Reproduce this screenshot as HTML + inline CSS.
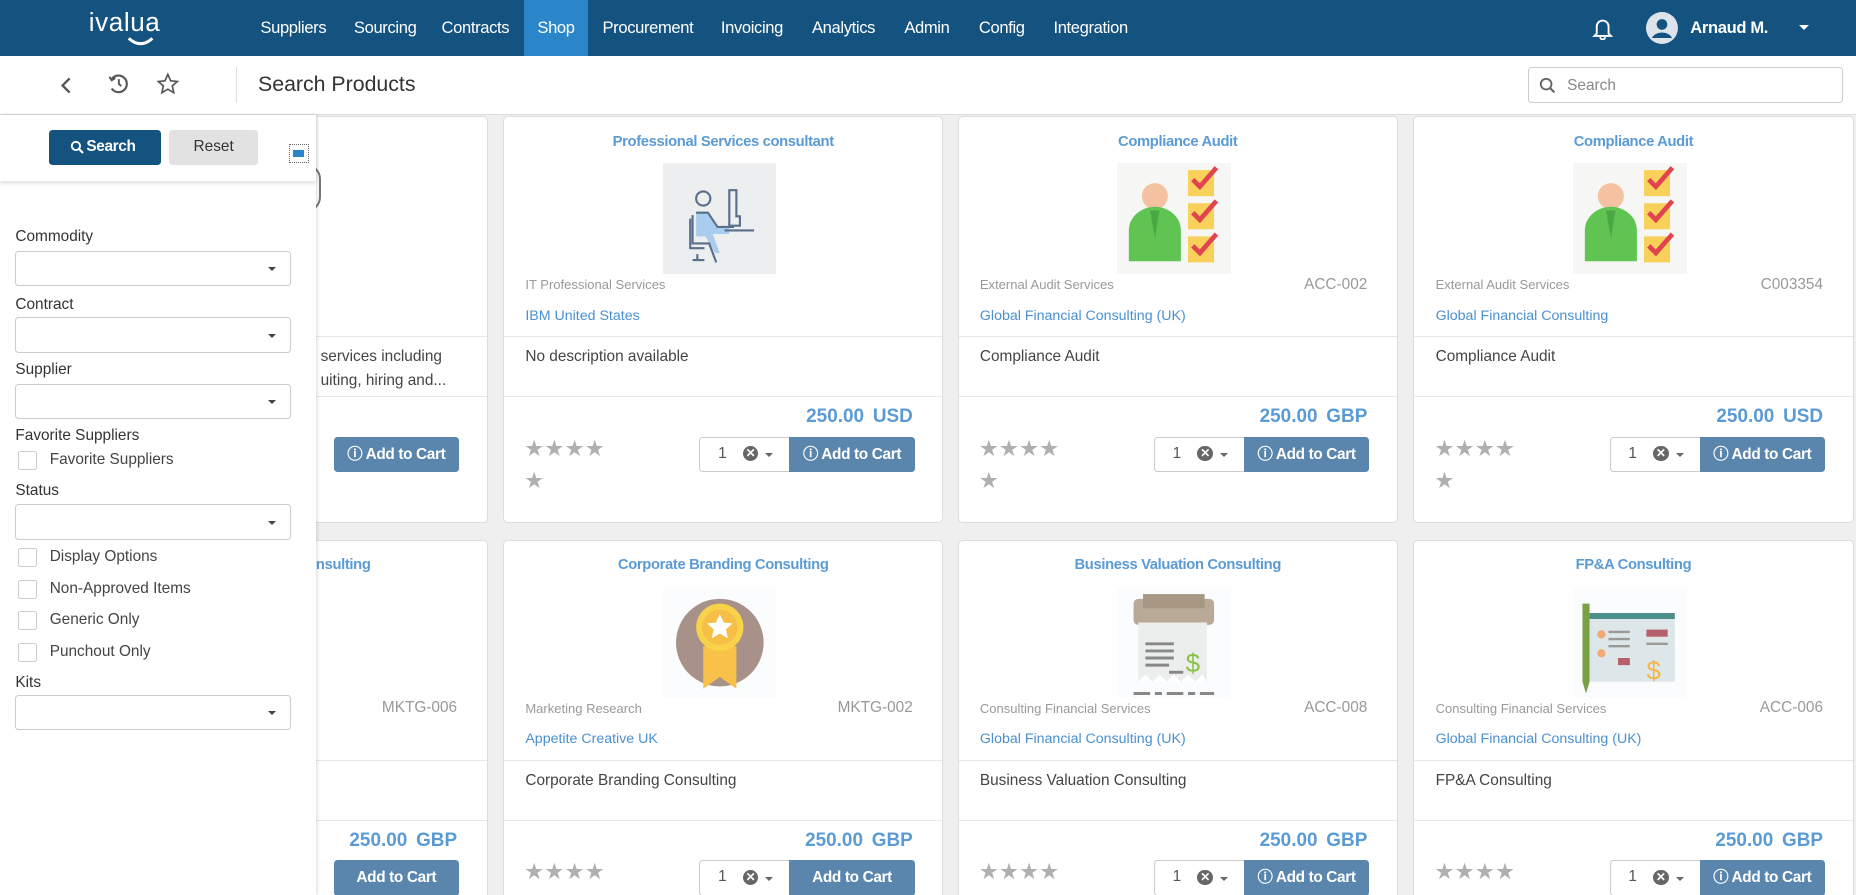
<!DOCTYPE html>
<html><head><meta charset="utf-8"><style>
*{box-sizing:border-box;margin:0;padding:0}
html,body{width:1856px;height:895px;overflow:hidden;background:#f2f2f2}
#w{zoom:1.18367;width:1568px;height:756px;position:relative;font-family:"Liberation Sans",sans-serif;overflow:hidden;background:#efefef}
.a{position:absolute}
.nav{left:0;top:0;width:1568px;height:47px;background:#14527f}
.nav span.i{position:absolute;top:15px;color:#fff;font-size:14px;letter-spacing:-0.3px}
.sub{left:0;top:47px;width:1568px;height:50px;background:#fff;border-bottom:1px solid #ddd}
.card{position:absolute;width:372px;height:344px;background:#fff;border:1px solid #ddd;border-radius:4px;overflow:hidden}
.card .t{position:absolute;top:14px;left:0;right:0;text-align:center;color:#5b9bd5;font-weight:bold;font-size:12.5px;letter-spacing:-0.3px}
.card .im{position:absolute;top:39px;left:134px;width:96px;height:94px;background:#fbfcfd}
.card .cat{position:absolute;top:135px;left:18px;font-size:11px;color:#999}
.card .cd{position:absolute;top:134px;right:25px;font-size:13px;color:#999}
.card .sp{position:absolute;top:161px;left:18px;font-size:12px;color:#4a90d0}
.card .hr1{position:absolute;top:185px;left:0;right:0;border-top:1px solid #e8e8e8}
.card .ds{position:absolute;top:193px;left:18px;font-size:13px;color:#444;line-height:20px}
.card .hr2{position:absolute;top:236px;left:0;right:0;border-top:1px solid #e8e8e8}
.card .pr{position:absolute;top:244px;right:25px;font-size:16px;font-weight:bold;color:#5b9bd5;word-spacing:3px}
.card .st{position:absolute;left:17px;font-size:19px;line-height:20px;color:#b0b0b0;letter-spacing:0px}
.card .q{position:absolute;top:270px;left:165px;width:77px;height:30px;border:1px solid #ccc;border-radius:3px 0 0 3px;font-size:13px;color:#555;padding:6px 0 0 15px}
.card .q b{position:absolute;left:36px;top:7px;width:13px;height:13px;border-radius:50%;background:#666;color:#fff;font-size:10px;line-height:13px;text-align:center}
.card .q i{position:absolute;left:55px;top:13px;border:4px solid transparent;border-top-color:#666;border-bottom:0}
.card .bt{position:absolute;top:270px;left:241px;width:106px;height:30px;background:#5a86ad;color:#fff;font-weight:bold;font-size:13px;text-align:center;line-height:30px;border-radius:0 3px 3px 0;letter-spacing:-0.3px}
.lp{left:0;top:97px;width:267px;height:659px;background:#fff;box-shadow:1px 0 3px rgba(0,0,0,.15)}
.lbl{position:absolute;left:13px;font-size:13px;color:#333}
.sel{position:absolute;left:13px;width:233px;height:30px;border:1px solid #ccc;border-radius:3px;background:#fff}
.sel:after{content:"";position:absolute;right:12px;top:13px;border:4px solid transparent;border-top-color:#444;border-bottom:0}
.cb{position:absolute;left:15px;width:16px;height:16px;border:1px solid #ccc;border-radius:2px}
.cbl{position:absolute;left:42px;font-size:13px;color:#444}
</style></head><body><div id="w">

<div class="a nav">
 <div class="a" style="left:75px;top:6px;color:#fff;font-size:22px;letter-spacing:0.5px">ivalua</div>
 <svg class="a" style="left:105px;top:30px" width="28" height="10"><path d="M4 2 Q14 11 24 2" stroke="#fff" stroke-width="2.5" fill="none"/></svg>
 <div class="a" style="left:443px;top:0;width:54px;height:47px;background:#2a86c8"></div>
 <span class="i" style="left:220px">Suppliers</span><span class="i" style="left:299px">Sourcing</span><span class="i" style="left:373px">Contracts</span><span class="i" style="left:454px">Shop</span><span class="i" style="left:509px">Procurement</span><span class="i" style="left:609px">Invoicing</span><span class="i" style="left:686px">Analytics</span><span class="i" style="left:764px">Admin</span><span class="i" style="left:827px">Config</span><span class="i" style="left:890px">Integration</span>
 <svg class="a" style="left:1345px;top:14px" width="18" height="20"><path d="M4 14 V8 a5 5 0 0 1 10 0 V14 L16 16 H2 Z M7 17 a2 2 0 0 0 4 0" stroke="#fff" stroke-width="1.6" fill="none"/></svg>
 <svg class="a" style="left:1391px;top:10px" width="27" height="27"><circle cx="13.5" cy="13.5" r="13.5" fill="#dde3ea"/><circle cx="13.5" cy="10.5" r="4.5" fill="#14527f"/><path d="M5 22 a9 7 0 0 1 17 0" fill="#14527f"/></svg>
 <span class="i" style="left:1428px;font-weight:bold">Arnaud M.</span>
 <div class="a" style="left:1520px;top:21px;border:5px solid transparent;border-top-color:#fff;border-bottom:0"></div>
</div>

<div class="a sub">
 <svg class="a" style="left:50px;top:17px" width="12" height="16"><path d="M9 2 L3 8 L9 14" stroke="#555" stroke-width="2" fill="none"/></svg>
 <svg class="a" style="left:90px;top:14px" width="20" height="20"><path d="M4 6 A7 7 0 1 1 4 14" stroke="#555" stroke-width="1.8" fill="none"/><path d="M2 4 L4 7 L7 5" stroke="#555" stroke-width="1.6" fill="none"/><path d="M10 6 V10 L12 12" stroke="#555" stroke-width="1.6" fill="none"/></svg>
 <svg class="a" style="left:132px;top:14px" width="20" height="20"><path d="M10 2 L12.4 7.5 L18 8 L13.8 11.7 L15 17.5 L10 14.5 L5 17.5 L6.2 11.7 L2 8 L7.6 7.5 Z" stroke="#555" stroke-width="1.4" fill="none"/></svg>
 <div class="a" style="left:199px;top:10px;height:30px;border-left:1px solid #ddd"></div>
 <div class="a" style="left:218px;top:14px;font-size:18px;color:#333">Search Products</div>
 <div class="a" style="left:1291px;top:10px;width:266px;height:30px;border:1px solid #ccc;border-radius:3px"></div>
 <svg class="a" style="left:1300px;top:18px" width="14" height="14"><circle cx="6" cy="6" r="4.5" stroke="#666" stroke-width="1.6" fill="none"/><path d="M9 9 L13 13" stroke="#666" stroke-width="1.8"/></svg>
 <div class="a" style="left:1324px;top:18px;font-size:13px;color:#888">Search</div>
</div>

<div class="card" style="left:40px;top:98px">
 <div class="a" style="left:218px;top:40px;width:12px;height:40px;border:2px solid #777;border-left:none;border-radius:0 20px 20px 0"></div>
 <div class="ds" style="left:230px">services including<br>uiting, hiring and...</div>
 <div class="hr1"></div><div class="hr2"></div>
 <div class="bt" style="left:241px;border-radius:3px">ⓘ Add to Cart</div>
</div>
<div class="card" style="left:40px;top:456px">
 <div class="t" style="left:210px;text-align:left">Consulting</div>
 <div class="cd">MKTG-006</div><div class="hr1"></div><div class="hr2"></div>
 <div class="pr">250.00 GBP</div>
 <div class="bt" style="border-radius:3px">Add to Cart</div>
</div>

<div class="card" style="left:425px;top:98px">
 <div class="t">Professional Services consultant</div>
 <div class="im" style="background:#eceef0"><svg width="96" height="94"><path d="M28 42 h10 l8 12 h10 v6 h-14 l6 16 h-4 l-8 -14 h-8 z" fill="#a9cdee"/><g stroke="#5a6f8a" stroke-width="1.8" fill="none"><circle cx="34" cy="30" r="6"/><path d="M28 42 h10 l8 12 h14 M25 44 v24 h14 l6 16 M23 47 v25 h12 M29 77 v5 M25 82 h10"/><path d="M56 23 h6 v22 h3 v8 h-9 z M52 57 h25"/></g></svg></div>
 <div class="cat">IT Professional Services</div>
 <div class="sp">IBM United States</div><div class="hr1"></div>
 <div class="ds">No description available</div><div class="hr2"></div>
 <div class="pr">250.00 USD</div>
 <div class="st" style="top:270px">★★★★</div><div class="st" style="top:297px">★</div>
 <div class="q">1<b>✕</b><i></i></div><div class="bt">ⓘ Add to Cart</div>
</div>

<div class="card" style="left:809px;top:98px">
 <div class="t">Compliance Audit</div>
 <div class="im" style="background:#f6f6f4"><svg width="96" height="94"><circle cx="32" cy="28" r="11" fill="#f4c2a0"/><path d="M10 83 v-26 a22 20 0 0 1 44 0 v26z" fill="#5fc452"/><path d="M28 40 h8 l-4 24z" fill="#4aa843"/><g fill="#f8d15a"><rect x="60" y="6" width="22" height="22"/><rect x="60" y="34" width="22" height="22"/><rect x="60" y="62" width="22" height="22"/></g><g stroke="#e0454f" stroke-width="4" fill="none"><path d="M64 14 l6 6 l14 -16"/><path d="M64 42 l6 6 l14 -16"/><path d="M64 70 l6 6 l14 -16"/></g></svg></div>
 <div class="cat">External Audit Services</div><div class="cd">ACC-002</div>
 <div class="sp">Global Financial Consulting (UK)</div><div class="hr1"></div>
 <div class="ds">Compliance Audit</div><div class="hr2"></div>
 <div class="pr">250.00 GBP</div>
 <div class="st" style="top:270px">★★★★</div><div class="st" style="top:297px">★</div>
 <div class="q">1<b>✕</b><i></i></div><div class="bt">ⓘ Add to Cart</div>
</div>

<div class="card" style="left:1194px;top:98px">
 <div class="t">Compliance Audit</div>
 <div class="im" style="background:#f6f6f4"><svg width="96" height="94"><circle cx="32" cy="28" r="11" fill="#f4c2a0"/><path d="M10 83 v-26 a22 20 0 0 1 44 0 v26z" fill="#5fc452"/><path d="M28 40 h8 l-4 24z" fill="#4aa843"/><g fill="#f8d15a"><rect x="60" y="6" width="22" height="22"/><rect x="60" y="34" width="22" height="22"/><rect x="60" y="62" width="22" height="22"/></g><g stroke="#e0454f" stroke-width="4" fill="none"><path d="M64 14 l6 6 l14 -16"/><path d="M64 42 l6 6 l14 -16"/><path d="M64 70 l6 6 l14 -16"/></g></svg></div>
 <div class="cat">External Audit Services</div><div class="cd">C003354</div>
 <div class="sp">Global Financial Consulting</div><div class="hr1"></div>
 <div class="ds">Compliance Audit</div><div class="hr2"></div>
 <div class="pr">250.00 USD</div>
 <div class="st" style="top:270px">★★★★</div><div class="st" style="top:297px">★</div>
 <div class="q">1<b>✕</b><i></i></div><div class="bt">ⓘ Add to Cart</div>
</div>

<div class="card" style="left:425px;top:456px">
 <div class="t">Corporate Branding Consulting</div>
 <div class="im"><svg width="96" height="94"><circle cx="48" cy="47" r="37" fill="#a89189"/><path d="M34 50 v36 l14 -10 l14 10 v-36z" fill="#f8c14a"/><circle cx="48" cy="34" r="20" fill="#f8d34a"/><circle cx="48" cy="34" r="15" fill="#f5bf48"/><path d="M48 23 l3.3 7 l7.5 .8 l-5.6 5 l1.6 7.4 l-6.8 -3.8 l-6.8 3.8 l1.6 -7.4 l-5.6 -5 l7.5 -.8z" fill="#fff"/></svg></div>
 <div class="cat">Marketing Research</div><div class="cd">MKTG-002</div>
 <div class="sp">Appetite Creative UK</div><div class="hr1"></div>
 <div class="ds">Corporate Branding Consulting</div><div class="hr2"></div>
 <div class="pr">250.00 GBP</div>
 <div class="st" style="top:270px">★★★★</div>
 <div class="q">1<b>✕</b><i></i></div><div class="bt">Add to Cart</div>
</div>

<div class="card" style="left:809px;top:456px">
 <div class="t">Business Valuation Consulting</div>
 <div class="im"><svg width="96" height="94"><rect x="14" y="10" width="68" height="22" rx="4" fill="#b9aa98"/><rect x="22" y="6" width="52" height="12" fill="#a89782"/><rect x="18" y="30" width="58" height="50" fill="#eceeee"/><path d="M18 80 l6 -6 l6 6 l6 -6 l6 6 l6 -6 l6 6 l6 -6 l6 6 l6 -6 l4 6z" fill="#fff"/><g stroke="#888" stroke-width="2.5"><path d="M24 48 h24 M24 54 h24 M24 60 h24 M24 66 h20 M44 72 h12 M14 90 h14 M32 90 h6 M42 90 h14 M60 90 h6 M70 90 h12"/></g><text x="58" y="72" font-size="22" fill="#8bc34a" font-family="Liberation Sans">$</text></svg></div>
 <div class="cat">Consulting Financial Services</div><div class="cd">ACC-008</div>
 <div class="sp">Global Financial Consulting (UK)</div><div class="hr1"></div>
 <div class="ds">Business Valuation Consulting</div><div class="hr2"></div>
 <div class="pr">250.00 GBP</div>
 <div class="st" style="top:270px">★★★★</div>
 <div class="q">1<b>✕</b><i></i></div><div class="bt">ⓘ Add to Cart</div>
</div>

<div class="card" style="left:1194px;top:456px">
 <div class="t">FP&amp;A Consulting</div>
 <div class="im"><svg width="96" height="94"><rect x="14" y="22" width="72" height="58" fill="#dde6e8"/><rect x="14" y="22" width="72" height="5" fill="#4c8f8a"/><rect x="62" y="36" width="18" height="6" fill="#b5606a"/><g stroke="#999" stroke-width="2"><path d="M30 38 h18 M30 44 h18 M62 48 h18 M30 50 h18"/></g><rect x="38" y="60" width="10" height="6" fill="#b5606a"/><circle cx="24" cy="40" r="3.5" fill="#f2a97a"/><circle cx="24" cy="56" r="3.5" fill="#f2a97a"/><text x="62" y="78" font-size="22" fill="#f5b54a" font-family="Liberation Sans">$</text><path d="M8 14 v66 l3 10 l3 -10 v-66z" fill="#7aa046"/></svg></div>
 <div class="cat">Consulting Financial Services</div><div class="cd">ACC-006</div>
 <div class="sp">Global Financial Consulting (UK)</div><div class="hr1"></div>
 <div class="ds">FP&amp;A Consulting</div><div class="hr2"></div>
 <div class="pr">250.00 GBP</div>
 <div class="st" style="top:270px">★★★★</div>
 <div class="q">1<b>✕</b><i></i></div><div class="bt">ⓘ Add to Cart</div>
</div>

<div class="a lp">
 <div class="a" style="left:0;top:0;width:267px;height:56px;background:#fff;box-shadow:0 2px 3px rgba(0,0,0,.12)"></div>
 <div class="a" style="left:41px;top:13px;width:95px;height:29px;background:#14527f;border-radius:3px;color:#fff;font-size:13px;font-weight:bold;line-height:29px;padding-left:32px;letter-spacing:-0.3px">Search</div>
 <svg class="a" style="left:59px;top:21px" width="12" height="12"><circle cx="5" cy="5" r="3.5" stroke="#fff" stroke-width="1.6" fill="none"/><path d="M7.5 7.5 L11 11" stroke="#fff" stroke-width="1.8"/></svg>
 <div class="a" style="left:143px;top:13px;width:75px;height:29px;background:#e2e2e2;border-radius:3px;color:#333;font-size:13px;text-align:center;line-height:29px">Reset</div>
 <div class="a" style="left:244px;top:25px;width:17px;height:16px;border:1px dotted #666;background:#fff"><div class="a" style="left:3px;top:4px;width:9px;height:6px;background:#2a86c8"></div></div>
 <div class="lbl" style="top:96px">Commodity</div><div class="sel" style="top:115px"></div>
 <div class="lbl" style="top:153px">Contract</div><div class="sel" style="top:171px"></div>
 <div class="lbl" style="top:208px">Supplier</div><div class="sel" style="top:227px"></div>
 <div class="lbl" style="top:264px">Favorite Suppliers</div>
 <div class="cb" style="top:284px"></div><div class="cbl" style="top:284px">Favorite Suppliers</div>
 <div class="lbl" style="top:310px">Status</div><div class="sel" style="top:329px"></div>
 <div class="cb" style="top:366px"></div><div class="cbl" style="top:366px">Display Options</div>
 <div class="cb" style="top:393px"></div><div class="cbl" style="top:393px">Non-Approved Items</div>
 <div class="cb" style="top:419px"></div><div class="cbl" style="top:419px">Generic Only</div>
 <div class="cb" style="top:446px"></div><div class="cbl" style="top:446px">Punchout Only</div>
 <div class="lbl" style="top:472px">Kits</div><div class="sel" style="top:490px"></div>
</div>

</div></body></html>
